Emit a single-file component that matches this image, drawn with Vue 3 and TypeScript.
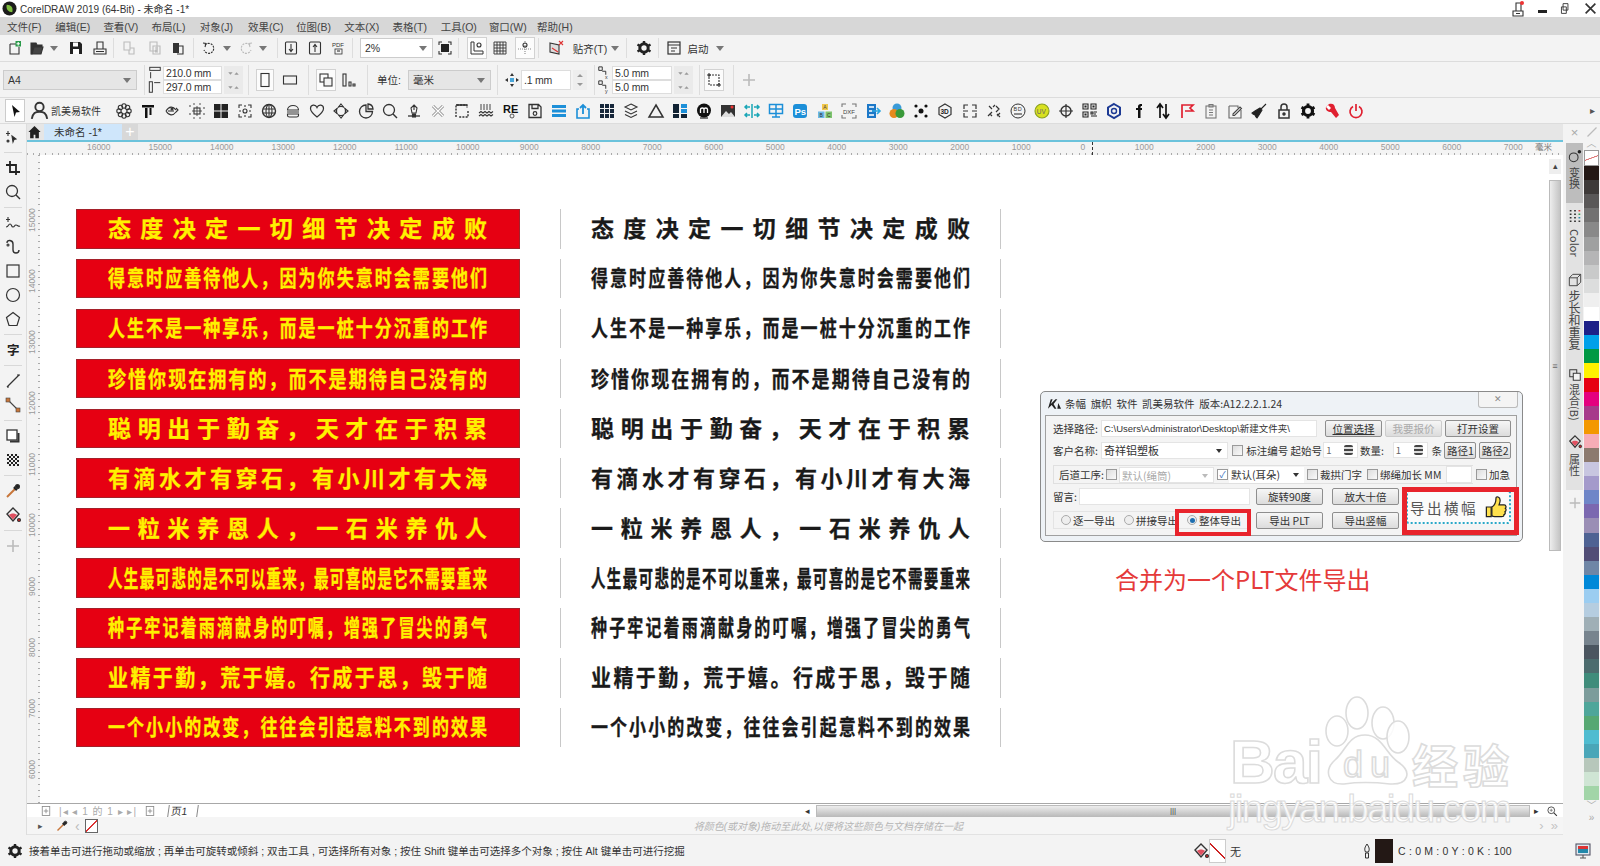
<script setup lang="ts">
interface Tool {
  x: number
  w?: number
  icon?: string
  text?: string
  cls?: string
  lines?: string[]
}

const flower = [0, 45, 90, 135, 180, 225, 270, 315]
  .map((a) => `<circle cx="${8 + 5 * Math.cos((a * Math.PI) / 180)}" cy="${8 + 5 * Math.sin((a * Math.PI) / 180)}" r="2.2"/>`)
  .join('')

const icons: Record<string, string> = {
  logo: '<circle cx="8" cy="8" r="7.5" fill="#1b1b1b" stroke="none"/><path d="M5 4c5 0 7 3 6 8-4 0-7-3-6-8z" fill="#7fbf3f" stroke="none"/>',
  new: '<path d="M3 4h6M3 4v10h9V7"/><rect x="8.5" y="1" width="5.5" height="5.5" fill="#2a9a4a" stroke="none"/><path d="M11.2 2v3.4M9.5 3.7h3.4" stroke="#fff"/>',
  open: '<path d="M2 3h5l1 2h5v2H5l-2 7H2z" fill="#333"/><path d="M5 7h9l-2 7H3z" fill="#444"/>',
  caret: '<path d="M4 6h8l-4 5z" fill="#777" stroke="none"/>',
  save: '<path d="M2 2h10l2 2v10H2z" fill="#222" stroke="none"/><rect x="5" y="2.5" width="5" height="4" fill="#fff" stroke="none"/><rect x="5" y="9" width="6" height="5" fill="#fff" stroke="none"/>',
  print: '<path d="M5 2h6v7H5zM2 9h12v5H2zM4 11.5h8"/>',
  lamp: '<path d="M6 2h5v8H6zM3 10h10v5H3zM6 12.500h4"/><circle cx="12" cy="2" r="2" fill="#e33" stroke="none"/>',
  g1: '<path d="M3 2h6v8H3zM9 8h4v6H8v-4" stroke="#bbb"/>',
  g2: '<path d="M3 2h7v9H3zM6 6h7v8H6zM8 8h3M8 10h3M8 12h3" stroke="#bbb"/>',
  paste: '<rect x="3" y="3" width="6" height="10" fill="#333" stroke="none"/><path d="M9 6h4v8H7"/>',
  undo: '<path d="M4 5a5 5 0 1 1-1 5" stroke-dasharray="2 1"/><path d="M2 3l3 .5L4 7"/>',
  redo: '<path d="M12 5a5 5 0 1 0 1 5" stroke="#bbb" stroke-dasharray="2 1"/><path d="M14 3l-3 .5L12 7" stroke="#bbb"/>',
  imp: '<rect x="2.5" y="2" width="11" height="12" rx="1"/><path d="M8 4v7M6 9l2 2.5L10 9"/>',
  exp: '<rect x="2.5" y="2" width="11" height="12" rx="1"/><path d="M8 12V5M6 7l2-2.5L10 7"/>',
  pdf: '<text x="1" y="7" font-size="6" fill="#333" stroke="none" font-family="Liberation Sans">PDF</text><rect x="4" y="9" width="7" height="5" stroke-width=".8"/><path d="M6 11h3"/>',
  fit: '<rect x="4" y="4" width="8" height="8" fill="#222" stroke="none"/><path d="M2 5V2h3M11 2h3v3M14 11v3h-3M5 14H2v-3"/>',
  rulerbox: '<path d="M2 2h3v9h9v3H2z" stroke-width="1"/><circle cx="10" cy="5" r="2"/>',
  grid: '<path d="M2 2h12v12H2zM5 2v12M8 2v12M11 2v12M2 5h12M2 8h12M2 11h12" stroke-width=".9"/>',
  guide: '<path d="M8 1v14M1 9h14" stroke="#888" stroke-dasharray="1 1"/><circle cx="8" cy="5" r="2"/>',
  snapx: '<path d="M2 3l9 2v9l-9-2z" fill="#ddd"/><path d="M4 8l6 4M11 1l4 4M15 1l-4 4" stroke="#d33"/>',
  gear: '<circle cx="8" cy="8" r="4.2" stroke="#222" stroke-width="3"/><path d="M8 1v3M8 12v3M1.5 4.5l2.5 1.5M12 10l2.5 1.5M1.5 11.5L4 10M12 6l2.5-1.5" stroke="#222" stroke-width="2.4"/>',
  win: '<rect x="2" y="2" width="12" height="12" stroke-width="1.2"/><path d="M2 5h12M5 8h6M5 11h4"/>',
  wh: '<rect x="2" y="1.5" width="12" height="3.5"/><path d="M3 7v7"/>',
  hh: '<rect x="1.5" y="2" width="3.5" height="12"/><path d="M7 3h7"/>',
  spin: '<path d="M5 5l3-3 3 3zM5 11l3 3 3-3z" fill="#999" stroke="none"/>',
  spinh: '<path d="M2 7h5L4.500 10zM9 10h5l-2.500-3z" fill="#999" stroke="none"/>',
  portrait: '<rect x="4" y="1.5" width="8" height="13"/>',
  land: '<rect x="1.5" y="4" width="13" height="8"/>',
  pages: '<rect x="2" y="2" width="8" height="8"/><rect x="6" y="6" width="8" height="8" fill="#f3f3f3"/>',
  bars: '<rect x="2" y="2" width="3" height="12"/><path d="M8 14h2v-4H8zM12 14h2v-2h-2z"/>',
  nudge: '<path d="M8 1l2 3H6zM8 15l-2-3h4zM1 8l3-2v4zM15 8l-3 2V6z" fill="#333" stroke="none"/><rect x="6" y="6" width="4" height="4" fill="#4aa5d8" stroke="none"/>',
  dup: '<path d="M2 1h4v4H2zM6 6h4v4"/><text x="9" y="15" font-size="6" fill="#333" stroke="none" font-family="Liberation Sans">x</text>',
  dupy: '<path d="M2 1h4v4H2zM6 6h4v4"/><text x="9" y="15" font-size="6" fill="#333" stroke="none" font-family="Liberation Sans">y</text>',
  frame: '<path d="M3 3h10v10H3z" stroke-dasharray="2 1"/><path d="M3 1v4M1 3h4M13 11v4M11 13h4"/>',
  plus: '<path d="M8 2v12M2 8h12" stroke="#bbb" stroke-width="1.6"/>',
  pick: '<path d="M5 2l8 7-4 .4L7.5 14z" fill="#111" stroke="none"/>',
  person: '<circle cx="8" cy="5" r="3.5" stroke-width="1.6"/><path d="M1.5 15c1-5 3-6 6.5-6s5.500 1 6.500 6" stroke-width="1.6"/>',
  flower: flower,
  tbar: '<path d="M2 2h12v2.500H2zM5 5h2.500v10H5zM9.500 5h2v7h-2z" fill="#111" stroke="none"/>',
  fish: '<path d="M2 8c3-5 7-5 10-1M2 8c3 5 7 5 10 1M12 5l2 2-2 2" /><circle cx="8" cy="6" r="1" fill="#333"/><path d="M4 8h6"/>',
  target: '<path d="M1 4V2M4 1h2M10 1h2M15 4v2M15 10v2M1 10v2M4 15h2M10 15h2" stroke="#555"/><rect x="5" y="5" width="6" height="6"/><path d="M8 3v10M3 8h10" stroke-width=".8"/>',
  four: '<rect x="1" y="1" width="6.500" height="6.500" fill="#222" stroke="none"/><rect x="8.500" y="1" width="6.500" height="6.500" fill="#222" stroke="none"/><rect x="1" y="8.500" width="6.500" height="6.500" fill="#222" stroke="none"/><rect x="8.500" y="8.500" width="6.500" height="6.500" fill="#222" stroke="none"/>',
  corners: '<path d="M2 5V2h3M11 2h3v3M14 11v3h-3M5 14H2v-3M8 2v2M8 12v2M2 8h2M12 8h2"/><circle cx="8" cy="8" r="2"/>',
  globe: '<circle cx="8" cy="8" r="6.500" stroke-width="1.400"/><ellipse cx="8" cy="8" rx="3" ry="6.500"/><path d="M2 6h12M2 10h12M8 1.500v13"/>',
  burger: '<path d="M2.500 7c0-6 11-6 11 0zM2 9h12M2.500 11h11v1.500c0 1-1 1.500-2 1.500h-7c-1 0-2-.500-2-1.500z" stroke-width="1.100"/>',
  heart: '<path d="M8 14C3 10 1.500 7.500 1.500 5.500c0-4 5-4.500 6.500-1 1.500-3.500 6.500-3 6.500 1 0 2-1.500 4.500-6.500 8.500z" stroke-width="1.200"/>',
  diamond: '<circle cx="8" cy="8" r="4.500"/><path d="M8 1l2 2.500H6zM8 15l-2-2.500h4zM1 8l2.500-2v4zM15 8l-2.500 2V6z"/>',
  pie: '<path d="M8 2a6.500 6.500 0 1 0 6.500 6.500H8z" stroke-width="1.300"/><path d="M10 1a5.500 5.500 0 0 1 5 5h-5z" stroke-width="1.300"/>',
  mag: '<circle cx="7" cy="7" r="5.500" stroke-width="1.300"/><path d="M11 11l4 4" stroke-width="1.500"/>',
  pen: '<path d="M8 2l3 3-1 5H6L5 5zM8 2v5" /><path d="M2 13h12" stroke-width="1.300"/><rect x="6.500" y="11" width="3" height="3" fill="#333"/>',
  xcut: '<path d="M3 13L13 3M3 3l10 10" stroke-width="3" stroke="#888"/><path d="M3 13L13 3M3 3l10 10" stroke-width="1.400" stroke="#fff"/>',
  dash: '<path d="M2 14V2h11v3M14 8v6H5" stroke-dasharray="2 1.200" stroke-width="1.400"/><path d="M2 2h11" stroke-width="1.600"/>',
  comb: '<path d="M3 1v6M6 1v6M9 1v6M12 1v6" stroke-width=".9"/><path d="M1 10l2-1.500 2 1.500 2-1.500 2 1.500 2-1.500 2 1.500 2-1.500M1 13l2-1.500 2 1.500 2-1.500 2 1.500 2-1.500 2 1.500 2-1.500"/>',
  re: '<text x="0" y="10" font-size="11" font-weight="700" fill="#111" stroke="none" font-family="Liberation Sans">RE</text><circle cx="9" cy="13" r="2" stroke-width=".8"/>',
  floppy: '<path d="M2 1.500h9.500l2.500 2.500v10.500H2zM5 1.500v4h6v-4" stroke-width="1.300"/><circle cx="8" cy="10.500" r="1.800" stroke-width="1.200"/>',
  lines: '<path d="M1 2h14v3H1zM1 6.500h14v3H1zM1 11h14v3H1z" fill="#1c8fd8" stroke="none"/>',
  upload: '<path d="M4 6H2v9h12V6h-2" stroke="#1c8fd8" stroke-width="1.600"/><path d="M8 11V2M5 5l3-3 3 3" stroke="#1c8fd8" stroke-width="1.800"/>',
  nine: '<path d="M1 1h4v4H1zM6 1h4v4H6zM11 1h4v4h-4zM1 6h4v4H1zM6 6h4v4H6zM11 6h4v4h-4zM1 11h4v4H1zM6 11h4v4H6zM11 11h4v4h-4z" fill="#17283b" stroke="none"/>',
  layers: '<path d="M8 1l6 3-6 3-6-3zM2 8l6 3 6-3M2 11.500l6 3 6-3" stroke-width="1.100"/>',
  tri: '<path d="M8 2l7 12H1z" stroke-width="1.500"/>',
  mosaic: '<path d="M1 1h6v9H1zM1 11h6v4H1z" fill="#123" stroke="none"/><path d="M9 1h6v4H9zM9 6h6v4H9z" fill="#1c8fd8" stroke="none"/><path d="M9 11h6v4H9z" fill="#123" stroke="none"/>',
  mcircle: '<circle cx="8" cy="7.500" r="7" fill="#111" stroke="none"/><path d="M4.500 10V6.500c0-2 3.500-2 3.500 0V10M8 6.500c0-2 3.500-2 3.500 0V10" stroke="#fff" stroke-width="1.300"/><path d="M4 15h8" stroke="#111"/>',
  image: '<rect x="1" y="2" width="14" height="12" fill="#333" stroke="none"/><path d="M1 14l5-6 3 3 2-2 4 5z" fill="#ddd" stroke="none"/><circle cx="12" cy="4" r="1.500" fill="#e33" stroke="none"/>',
  arrows4: '<path d="M8 1v14M1 4h5M10 4h5M1 12h5M10 12h5M3 2l-2 2 2 2M13 2l2 2-2 2M3 10l-2 2 2 2M13 10l2 2-2 2" stroke="#1aa6b7" stroke-width="1.500"/>',
  monitor: '<rect x="1.500" y="1.500" width="13" height="9" stroke="#1c8fd8" stroke-width="1.500"/><path d="M8 1.500v9M1.500 6h13M8 10.500v3M4 14h8" stroke="#1c8fd8" stroke-width="1.500"/>',
  ps: '<rect x="1" y="1" width="14" height="14" rx="3" fill="#1c8fd8" stroke="none"/><text x="2.500" y="12" font-size="9.500" font-weight="700" fill="#fff" stroke="none" font-family="Liberation Sans">Ps</text>',
  abc: '<rect x="5" y="1" width="6" height="6" fill="#f1c84a" stroke="none"/><rect x="1" y="8.500" width="6.500" height="6.500" fill="#6ab7e6" stroke="none"/><rect x="8.500" y="8.500" width="6.500" height="6.500" fill="#7fc36c" stroke="none"/><text x="6.200" y="6" font-size="5" fill="#444" stroke="none" font-family="Liberation Sans">A</text><text x="2.500" y="14" font-size="5" fill="#333" stroke="none" font-family="Liberation Sans">B</text><text x="10" y="14" font-size="5" fill="#333" stroke="none" font-family="Liberation Sans">C</text>',
  dxf: '<path d="M1 4V1h4M11 1h4v3M15 12v3h-4M5 15H1v-3" stroke="#777"/><text x="2" y="10.500" font-size="6" fill="#444" stroke="none" font-family="Liberation Sans">DXF</text>',
  earrow: '<path d="M2 1h9v14H2z" fill="#1c78c8" stroke="none"/><path d="M4 4h5M4 8h3M4 12h5" stroke="#fff" stroke-width="1.300"/><path d="M7 8h8M12 5l3 3-3 3" stroke="#2aa6e0" stroke-width="1.600"/>',
  rgb: '<circle cx="8" cy="5" r="4.500" fill="#3a9bd8" stroke="none"/><circle cx="5" cy="10.500" r="4.500" fill="#e68a1e" stroke="none"/><circle cx="11" cy="10.500" r="4.500" fill="#3a9a3a" stroke="none"/>',
  dots: '<circle cx="8" cy="8" r="2.500" fill="#111" stroke="none"/><circle cx="3" cy="3" r="1.600" fill="#111" stroke="none"/><circle cx="13" cy="3" r="1.600" fill="#111" stroke="none"/><circle cx="3" cy="13" r="1.600" fill="#111" stroke="none"/><circle cx="13" cy="13" r="1.600" fill="#111" stroke="none"/>',
  three: '<path d="M8 1l6 3.500v7L8 15l-6-3.500v-7z" stroke-width="1.200"/><text x="3.500" y="10.500" font-size="6.500" font-weight="700" fill="#222" stroke="none" font-family="Liberation Sans">3D</text>',
  bracket: '<path d="M2 6V2h4M10 2h4v4M14 10v4h-4M6 14H2v-4M1 8h5M10 8h5" stroke-width="1.200"/>',
  broken: '<path d="M2 13l4-4M6 13l-2-2M10 3l3 3-3 3M9 2l-2 2M14 10l-3 3M3 3l3 3M11 11l3 3" stroke-width="1.200"/>',
  bd: '<circle cx="8" cy="8" r="7" stroke-width="1"/><text x="3.500" y="8" font-size="5.500" fill="#333" stroke="none" font-family="Liberation Sans">B</text><text x="7.800" y="8" font-size="5.500" fill="#333" stroke="none" font-family="Liberation Sans">D</text><path d="M4 11h8"/>',
  uv: '<circle cx="8" cy="8" r="7" fill="#d8e020" stroke="#8aa020"/><text x="2.800" y="10.500" font-size="6.500" fill="#666" stroke="none" font-family="Liberation Sans">UV</text>',
  cross: '<circle cx="8" cy="8" r="5" stroke-width="1.400"/><path d="M8 1v14M1 8h14" stroke-width="1.200"/>',
  qr: '<path d="M1 1h5v5H1zM9 1h5v5H9zM1 9h5v5H1zM3 3h1v1H3zM11 3h1v1h-1zM3 11h1v1H3zM9 9h2v2H9zM12 9h3M9 13h6M12 11h2" stroke="#222" stroke-width="1.100"/>',
  hex: '<path d="M8 1l6 3.500v7L8 15l-6-3.500v-7z" stroke="#1d3a94" stroke-width="2"/><circle cx="8" cy="8" r="2.500" stroke="#1d3a94" stroke-width="1.400"/>',
  fb: '<path d="M7 15V7H5V5h2V3.500C7 1.500 8.500 1 11 1v2C9.500 3 9.500 3.500 9.500 5H11v2H9.500v8z" fill="#111" stroke="none"/>',
  updown: '<path d="M5 15V2M2 5l3-4 3 4M11 1v13M8 11l3 4 3-4" stroke="#111" stroke-width="1.700"/>',
  flag: '<path d="M3 15V2h11l-3 3 3 3H6" stroke="#e02030" stroke-width="1.700"/>',
  clip: '<rect x="3" y="3" width="10" height="12" stroke="#777"/><path d="M6 1.500h4V4H6zM6 7h4M6 9.500h4M6 12h4" stroke="#777"/>',
  edit: '<path d="M2 3h9v2M14 7v8H2V3" stroke="#666"/><path d="M6 11l7-7 1.500 1.500-7 7H6z" stroke="#444"/>',
  brush: '<path d="M15 1L9 7M9 5L4 8l-3 2 1 1 2 1 1 2 1 1 2-3 3-5z" fill="#222" stroke="#222"/>',
  lock: '<rect x="3" y="7" width="10" height="8" stroke-width="1.500"/><path d="M5 7V4c0-4 6-4 6 0v3" stroke-width="1.500"/><circle cx="8" cy="11" r="1.200" fill="#333"/>',
  blackgear: '<circle cx="8" cy="8" r="4.500" stroke="#111" stroke-width="3.200"/><path d="M8 .5v3M8 12.500v3M1.500 4.300l2.600 1.500M11.900 10.200l2.600 1.500M1.500 11.700l2.600-1.500M11.900 5.800l2.600-1.500" stroke="#111" stroke-width="2.800"/>',
  wrench: '<path d="M2 4l3-3c3-1 6 0 6 4l4 7-3 3-5-6C4 9 1 7 2 4z" fill="#e02030" stroke="none"/><path d="M2 4l3 3 2-2-3-3z" fill="#fff" stroke="none"/>',
  power: '<path d="M5 3.500a6 6 0 1 0 6 0" stroke="#e02030" stroke-width="1.700"/><path d="M8 1v7" stroke="#e02030" stroke-width="1.700"/>',
  shape: '<path d="M3 2v5M1 4.500h4" /><path d="M7 7l4 3-2 .5-1 2.500z" fill="#222"/><circle cx="3" cy="12" r="1" fill="#555"/>',
  crop: '<path d="M5 1v11h10M1 5h10v10" stroke="#222" stroke-width="1.800"/>',
  free: '<path d="M1 12c3 0 2-3 4-3s1 3 3 3 1-2 3-2 2 2 4 1" /><path d="M3 2v5M1 4.500h4"/>',
  curve: '<path d="M2 4c0-4 6-3 6 1v6c0 4 6 4 6 0" stroke-width="1.400"/><circle cx="3" cy="6" r="1"/>',
  rect: '<rect x="2" y="2" width="12" height="12" stroke-width="1.200"/>',
  ellipse: '<circle cx="8" cy="8" r="6.500" stroke-width="1.200"/>',
  poly: '<path d="M8 1.500l6.500 5-2.500 8H4l-2.500-8z" stroke-width="1.200"/>',
  ziti: '<text x="2" y="12.500" font-size="12.500" font-weight="700" fill="#222" stroke="none" font-family="Noto Sans CJK SC">字</text>',
  line: '<path d="M2 14L14 2" stroke-width="1.200"/><path d="M2 14h2M12 2h3"/>',
  connector: '<path d="M3 3l10 10" stroke="#444"/><rect x="1" y="1" width="4" height="4" fill="#c8763a" stroke="#444" stroke-width=".6"/><rect x="11" y="11" width="4" height="4" fill="#c8763a" stroke="#444" stroke-width=".6"/>',
  shadow: '<rect x="2" y="2" width="10" height="10" fill="#fff" stroke-width="1.300"/><path d="M13.500 5v8.500H5" stroke-width="2"/>',
  checker: '<rect x="2" y="2" width="12" height="12" fill="#222" stroke="none"/><path d="M4 2h2v2H4zM8 2h2v2H8zM12 2h2v2h-2zM2 4h2v2H2zM6 4h2v2H6zM10 4h2v2h-2zM4 6h2v2H4zM8 6h2v2H8zM12 6h2v2h-2zM2 8h2v2H2zM6 8h2v2H6zM10 8h2v2h-2zM4 10h2v2H4zM8 10h2v2H8zM12 10h2v2h-2zM2 12h2v2H2zM6 12h2v2H6zM10 12h2v2h-2z" fill="#eee" stroke="none"/>',
  dropper: '<path d="M2 14l8-8" stroke="#c8763a" stroke-width="2"/><path d="M9 4l3 3" stroke="#222" stroke-width="2.500"/><circle cx="12.500" cy="3.500" r="2" fill="#222"/>',
  fill: '<path d="M8 1l6 6-6 7-6-7z" stroke-width="1.400"/><path d="M4 8c2-2 6-2 8 0l-4 4.500z" fill="#e05060" stroke="none"/><circle cx="14" cy="13" r="1.500" fill="#c22"/>',
  nib: '<path d="M8 1c2 3 3 5 1.500 8h-3C5 6 6 4 8 1zM6.500 10h3v5h-3z" stroke-width="1"/>',
  screen: '<rect x="1" y="1" width="14" height="11" fill="#dfe8f0" stroke="#556"/><rect x="3" y="3" width="10" height="3" fill="#d33" stroke="none"/><rect x="3" y="6" width="10" height="4" fill="#28a" stroke="none"/><path d="M5 15h6M8 12v3" stroke="#555"/>',
  zoom: '<circle cx="7" cy="7" r="4.500"/><path d="M10.500 10.500l4 4" stroke-width="1.500"/><path d="M5 7h4M7 5v4" stroke="#777"/>',
  pagedoc: '<rect x="3" y="2" width="10" height="12" stroke="#888"/><path d="M8 5v6M5 8h6" stroke="#888"/>',
  hand: '<path d="M1 8h3.500v7H1z" fill="#ffe14d" stroke="#222" stroke-width=".9"/><path d="M5 8c2-1 3-4 3-6.500 0-1.500 3-1 3 1.500 0 1.500-.5 2.500-.8 3.500H14c1.500 0 1.500 2 .8 2.500.8.600.6 2-.3 2.500.5.800.2 1.800-.8 2.200.2 1-.5 1.300-1.700 1.300H7c-1 0-2-.5-2-1z" fill="#ffe14d" stroke="#222" stroke-width=".9"/>',
  ring: '<circle cx="6.500" cy="9.500" r="5" stroke-width="1.200"/><circle cx="13" cy="3" r="2" fill="#222" stroke="none"/>',
  colorbars: '<path d="M2 2h2M2 6h2M2 10h2M2 14h2M7 2h2M7 6h2M7 10h2M7 14h2" stroke="#333" stroke-width="1.600"/><path d="M12 2h2" stroke="#d33" stroke-width="1.600"/><path d="M12 6h2" stroke="#2a9a4a" stroke-width="1.600"/><path d="M12 10h2" stroke="#28a" stroke-width="1.600"/><path d="M12 14h2" stroke="#333" stroke-width="1.600"/>',
  cube: '<path d="M1.500 5.500h9v9h-9zM1.500 5.500l4-4h9v9l-4 4M10.500 5.500l4-4" stroke="#444"/>',
}

function place(items: Tool[]) {
  let end = 0
  return items.map((it) => {
    const w = it.w ?? 18
    const left = it.x - w / 2 - end
    end = it.x + w / 2
    return { ...it, style: { width: w + 'px', marginLeft: left + 'px' } }
  })
}

const topTools = place([
  { x: 15, icon: 'new' }, { x: 37, icon: 'open' }, { x: 54, w: 8, icon: 'caret' }, { x: 76, icon: 'save' }, { x: 100, icon: 'print' },
  { x: 113, w: 1, cls: 'sep' }, { x: 129, icon: 'g1' }, { x: 155, icon: 'g2' }, { x: 178, icon: 'paste' }, { x: 193, w: 1, cls: 'sep' },
  { x: 209, icon: 'undo' }, { x: 227, w: 8, icon: 'caret' }, { x: 246, icon: 'redo' }, { x: 263, w: 8, icon: 'caret' }, { x: 277, w: 1, cls: 'sep' },
  { x: 291, icon: 'imp' }, { x: 315, icon: 'exp' }, { x: 339, icon: 'pdf' }, { x: 352, w: 1, cls: 'sep' },
  { x: 396.5, w: 73, cls: 'combo', text: '2%' }, { x: 445, icon: 'fit' }, { x: 458, w: 1, cls: 'sep' },
  { x: 477, w: 20, icon: 'rulerbox', cls: 'box' }, { x: 500, icon: 'grid' }, { x: 525, w: 20, icon: 'guide', cls: 'box' }, { x: 538, w: 1, cls: 'sep' },
  { x: 556, icon: 'snapx' }, { x: 590, w: 36, text: '贴齐(T)', cls: 'lbl' }, { x: 615, w: 8, icon: 'caret' }, { x: 626, w: 1, cls: 'sep' },
  { x: 644, icon: 'gear' }, { x: 658, w: 1, cls: 'sep' }, { x: 674, icon: 'win' }, { x: 698, w: 26, text: '启动', cls: 'lbl' }, { x: 720, w: 8, icon: 'caret' },
])

const propTools = place([
  { x: 70, w: 134, cls: 'combo', text: 'A4' }, { x: 144, w: 1, cls: 'sep tall' }, { x: 155, w: 14, cls: 'pair', lines: ['wh', 'hh'] },
  { x: 192.5, w: 59, cls: 'stack', lines: ['210.0 mm', '297.0 mm'] }, { x: 233, w: 19, cls: 'pair spins', lines: ['spinh', 'spinh'] }, { x: 248, w: 1, cls: 'sep tall' },
  { x: 265, w: 18, icon: 'portrait', cls: 'box' }, { x: 290, icon: 'land' }, { x: 308, w: 1, cls: 'sep tall' },
  { x: 326, w: 20, icon: 'pages', cls: 'box' }, { x: 349, icon: 'bars' }, { x: 367, w: 1, cls: 'sep tall' },
  { x: 389, w: 30, text: '单位:', cls: 'lbl' }, { x: 449.5, w: 83, cls: 'combo', text: '毫米' }, { x: 497, w: 1, cls: 'sep tall' },
  { x: 512, icon: 'nudge' }, { x: 546, w: 50, cls: 'stack one', lines: ['.1 mm'] }, { x: 580, w: 14, icon: 'spin', cls: 'spinbox' }, { x: 594, w: 1, cls: 'sep tall' },
  { x: 604, w: 14, cls: 'pair', lines: ['dup', 'dupy'] }, { x: 642, w: 60, cls: 'stack', lines: ['5.0 mm', '5.0 mm'] }, { x: 683, w: 19, cls: 'pair spins', lines: ['spinh', 'spinh'] }, { x: 699, w: 1, cls: 'sep tall' },
  { x: 714, w: 20, icon: 'frame', cls: 'box' }, { x: 733, w: 1, cls: 'sep tall' }, { x: 749, icon: 'plus' },
])

const objectIcons = [
  'flower', 'tbar', 'fish', 'target', 'four', 'corners', 'globe', 'burger', 'heart', 'diamond', 'pie', 'mag', 'pen', 'xcut', 'dash', 'comb', 're', 'floppy',
  'lines', 'upload', 'nine', 'layers', 'tri', 'mosaic', 'mcircle', 'image', 'arrows4', 'monitor', 'ps', 'abc', 'dxf', 'earrow', 'rgb', 'dots', 'three', 'bracket',
  'broken', 'bd', 'uv', 'cross', 'qr', 'hex', 'fb', 'updown', 'flag', 'clip', 'edit', 'brush', 'lock', 'blackgear', 'wrench', 'power',
]

const menus = ['文件(F)', '编辑(E)', '查看(V)', '布局(L)', '对象(J)', '效果(C)', '位图(B)', '文本(X)', '表格(T)', '工具(O)', '窗口(W)', '帮助(H)']

const leftTools: string[][] = [
  ['shape'], ['crop', 'mag'], ['free', 'curve', 'rect', 'ellipse', 'poly'], ['ziti'], ['line', 'connector'], ['shadow', 'checker'], ['dropper', 'fill'], ['plus'],
]

// commas in the slogans are full-width
const slogans = [
  { text: '态度决定一切细节决定成败', size: 23, tall: 1 },
  { text: '得意时应善待他人,因为你失意时会需要他们', size: 17, tall: 1.28 },
  { text: '人生不是一种享乐,而是一桩十分沉重的工作', size: 17, tall: 1.28 },
  { text: '珍惜你现在拥有的,而不是期待自己没有的', size: 18, tall: 1.22 },
  { text: '聪明出于勤奋,天才在于积累', size: 23, tall: 1 },
  { text: '有滴水才有穿石,有小川才有大海', size: 22, tall: 1.03 },
  { text: '一粒米养恩人,一石米养仇人', size: 22, tall: 1.03 },
  { text: '人生最可悲的是不可以重来,最可喜的是它不需要重来', size: 14.5, tall: 1.6 },
  { text: '种子牢记着雨滴献身的叮嘱,增强了冒尖的勇气', size: 16, tall: 1.4 },
  { text: '业精于勤,荒于嬉。行成于思,毁于随', size: 20, tall: 1.12 },
  { text: '一个小小的改变,往往会引起意料不到的效果', size: 17, tall: 1.28 },
].map((s) => ({ ...s, text: s.text.replace(/,/g, '\uFF0C') }))

const hTicks = [16000, 15000, 14000, 13000, 12000, 11000, 10000, 9000, 8000, 7000, 6000, 5000, 4000, 3000, 2000, 1000, 0, 1000, 2000, 3000, 4000, 5000, 6000, 7000]
const vTicks = [15000, 14000, 13000, 12000, 11000, 10000, 9000, 8000, 7000, 6000]

const swatches = [
  '#231815', '#3e3a39', '#595757', '#727171', '#898989', '#9fa0a0', '#b5b5b6', '#c9caca', '#dcdddd', '#efefef', '#ffffff', '#1d2088', '#00a0e9', '#009944', '#fff100', '#e60012', '#e4007f',
  '#a73a8b', '#f39800', '#f6adb6', '#8c7a6e', '#c8c6e0', '#a49acb', '#6f86c8', '#7b68b0', '#9a8eb5', '#4e6293', '#514d76', '#6f86a6', '#0088d8', '#9bcdf1', '#b5cde0', '#9fafb6', '#77848e',
  '#4b5660', '#4c6c6e', '#3f8c7b', '#7c9c9b', '#4ea69a', '#56a873', '#4fbcd0', '#4aa6b8', '#b7c7bb', '#cfe5d4', '#a2d5a8',
]

const docks = [
  { label: '变换', icon: 'ring', cls: 'active' },
  { label: 'Color', icon: 'colorbars', cls: 'color' },
  { label: '步长和重复', icon: 'cube', cls: 'step' },
  { label: '混合(B)', icon: 'pages', cls: 'mix' },
  { label: '属性', icon: 'fill', cls: 'attr' },
]
</script>

<template>
  <div class="app">
    <header class="titlebar">
      <svg class="ic logo" viewBox="0 0 16 16" v-html="icons.logo"></svg>
      <span class="title">CorelDRAW 2019 (64-Bit) - 未命名 -1*</span>
      <span class="winbtns">
        <svg class="ic" viewBox="0 0 16 16" v-html="icons.lamp"></svg>
        <b class="min"></b>
        <svg class="ic small" viewBox="0 0 16 16"><path d="M5 2h6v8H5zM3 6h6v8H3z" /></svg>
        <svg class="ic small" viewBox="0 0 16 16"><path d="M2 2l12 12M14 2L2 14" stroke-width="2" /></svg>
      </span>
    </header>

    <nav class="menubar">
      <span v-for="m in menus" :key="m" class="menu">{{ m }}</span>
    </nav>

    <div class="toolbar tb1">
      <div v-for="(it, i) in topTools" :key="i" class="item" :class="it.cls" :style="it.style">
        <svg v-if="it.icon" class="ic" viewBox="0 0 16 16" v-html="icons[it.icon]"></svg>
        <span v-if="it.text">{{ it.text }}</span>
      </div>
    </div>

    <div class="toolbar tb2">
      <div v-for="(it, i) in propTools" :key="i" class="item" :class="it.cls" :style="it.style">
        <svg v-if="it.icon" class="ic" viewBox="0 0 16 16" v-html="icons[it.icon]"></svg>
        <span v-if="it.text">{{ it.text }}</span>
        <template v-if="it.cls?.startsWith('stack')">
          <div v-for="(l, k) in it.lines" :key="k" class="field">{{ l }}</div>
        </template>
        <template v-if="it.cls?.startsWith('pair')">
          <svg v-for="(l, k) in it.lines" :key="k" class="ic half" viewBox="0 0 16 16" v-html="icons[l]"></svg>
        </template>
      </div>
    </div>

    <div class="toolbar tb3">
      <div class="pick"><svg class="ic" viewBox="0 0 16 16" v-html="icons.pick"></svg></div>
      <svg class="ic person" viewBox="0 0 16 16" v-html="icons.person"></svg>
      <span class="brand">凯美易软件</span>
      <span v-for="n in objectIcons" :key="n" class="obj">
        <svg class="ic" viewBox="0 0 16 16" v-html="icons[n]"></svg>
      </span>
      <span class="endcaret">▸</span>
    </div>

    <div class="work">
      <aside class="lefttools">
        <template v-for="(grp, g) in leftTools" :key="g">
          <div v-if="g" class="hsep"></div>
          <div v-for="n in grp" :key="n" class="tool"><svg class="ic" viewBox="0 0 16 16" v-html="icons[n]"></svg></div>
        </template>
      </aside>

      <div class="center">
        <div class="tabs">
          <svg class="home" viewBox="0 0 16 16"><path d="M8 1L1 8h2v7h4v-4h2v4h4V8h2z" fill="#222" /></svg>
          <span class="tab">未命名 -1*</span>
          <span class="tabplus">+</span>
        </div>
        <div class="hruler">
          <span v-for="(t, i) in hTicks" :key="i" class="htick" :class="{ zero: t === 0 }">{{ t }}</span>
          <span class="unit">毫米</span>
        </div>

        <div class="stage">
          <div class="vruler">
            <span v-for="t in vTicks" :key="t" class="vtick">{{ t }}</span>
          </div>

          <main class="canvas">
            <div class="rows">
              <template v-for="s in slogans" :key="s.text">
                <div class="banner red">
                  <span class="slogan" :style="{ fontSize: s.size + 'px', transform: `scaleY(${s.tall})` }">{{ s.text }}</span>
                </div>
                <div class="banner plain">
                  <span class="slogan" :style="{ fontSize: s.size + 'px', transform: `scaleY(${s.tall})` }">{{ s.text }}</span>
                </div>
              </template>
            </div>

            <section class="dialog">
              <div class="dlgtitle">
                <svg class="dlglogo" viewBox="0 0 16 12"><path d="M1 11L4 1h2L4 6l5-5h2L7 6l3 5H8L5 7zM11 11l1-6 3 6z" fill="#222" /></svg>
                <span>条幅&nbsp; 旗帜&nbsp; 软件&nbsp; 凯美易软件&nbsp; 版本:A12.2.2.1.24</span>
                <span class="dlgclose">✕</span>
              </div>
              <div class="panel">
                <div class="row r1">
                  <label class="lab">选择路径:</label>
                  <div class="inp path">C:\Users\Administrator\Desktop\新建文件夹\</div>
                  <button class="btn pos">位置选择</button>
                  <button class="btn quote" disabled>我要报价</button>
                  <button class="btn open">打开设置</button>
                </div>
                <div class="row r2">
                  <label class="lab">客户名称:</label>
                  <div class="inp cust">奇祥铝塑板<i class="drop"></i></div>
                  <i class="cb c1"></i><span class="t1">标注编号 起始号</span>
                  <div class="inp num">1<i class="updn"></i></div>
                  <span class="t2">数量:</span>
                  <div class="inp num">1<i class="updn"></i></div>
                  <span class="t3">条</span>
                  <button class="btn p1">路径1</button>
                  <button class="btn p2">路径2</button>
                </div>
                <div class="row r3">
                  <div class="grp">
                    <span class="lab3">后道工序:</span>
                    <i class="cb"></i>
                    <div class="inp c3 dim">默认(绳筒)<i class="drop light"></i></div>
                    <i class="cb on">✓</i>
                    <div class="inp c4">默认(耳朵)<i class="drop"></i></div>
                    <i class="cb"></i><span class="t4">裁拱门字</span>
                    <i class="cb"></i><span class="t5">绑绳加长 MM</span>
                    <div class="inp mm"></div>
                  </div>
                  <i class="cb"></i><span class="t6">加急</span>
                </div>
                <div class="bottom">
                  <div class="leftcol">
                    <div class="row r4">
                      <label class="lab4">留言:</label>
                      <div class="inp msg"></div>
                      <button class="btn act">旋转90度</button>
                      <button class="btn act">放大十倍</button>
                    </div>
                    <div class="row r5">
                      <div class="radios">
                        <i class="rd"></i><span class="rt">逐一导出</span>
                        <i class="rd"></i><span class="rt">拼接导出</span>
                        <i class="rd sel"></i><span class="rt">整体导出</span>
                      </div>
                      <button class="btn act">导出 PLT</button>
                      <button class="btn act">导出竖幅</button>
                    </div>
                  </div>
                  <button class="bigbtn">
                    <span>导出横幅</span>
                    <svg viewBox="0 0 16 16" v-html="icons.hand"></svg>
                  </button>
                </div>
              </div>
              <div class="mark markradio"></div>
              <div class="mark markbig"></div>
            </section>

            <p class="caption">合并为一个PLT文件导出</p>
          </main>

          <div class="vscroll">
            <span class="vbtn">▴</span>
            <div class="vthumb"><span>≡</span></div>
          </div>
        </div>

        <div class="pagebar">
          <svg class="ic nav" viewBox="0 0 16 16" v-html="icons.pagedoc"></svg>
          <span class="navtxt">|◂ ◂ 1 的 1 ▸ ▸|</span>
          <svg class="ic nav" viewBox="0 0 16 16" v-html="icons.pagedoc"></svg>
          <span class="pagetab">页1</span>
          <span class="sarrow">◂</span>
          <div class="hthumb"><span>|||</span></div>
          <span class="sarrow">▸</span>
          <svg class="ic nav zm" viewBox="0 0 16 16" v-html="icons.zoom"></svg>
        </div>

        <div class="colorbar">
          <span class="cbcaret">▸</span>
          <svg class="ic nav" viewBox="0 0 16 16" v-html="icons.dropper"></svg>
          <span class="cbprev">‹</span>
          <span class="noneswatch"></span>
          <span class="hint">将颜色(或对象)拖动至此处,以便将这些颜色与文档存储在一起</span>
          <span class="cbnext">› &nbsp;»</span>
        </div>
      </div>

      <div class="dock">
        <span class="dockx">×</span>
        <div v-for="d in docks" :key="d.label" class="docktab" :class="d.cls">
          <svg class="ic" viewBox="0 0 16 16" v-html="icons[d.icon]"></svg>
          <span>{{ d.label }}</span>
        </div>
        <svg class="ic dockplus" viewBox="0 0 16 16" v-html="icons.plus"></svg>
      </div>

      <div class="palette">
        <svg class="ic palpen" viewBox="0 0 16 16"><path d="M2 14L12 4l2-2" stroke="#bbb" stroke-width="1.600" /></svg>
        <span class="chev">︿</span>
        <div class="swatches">
          <i class="swatch none"></i>
          <i v-for="c in swatches" :key="c" class="swatch" :style="{ background: c }"></i>
        </div>
        <span class="chev">﹀</span>
        <span class="chev">»</span>
      </div>
    </div>

    <footer class="status">
      <svg class="ic" viewBox="0 0 16 16" v-html="icons.gear"></svg>
      <span class="stext">接着单击可进行拖动或缩放 ; 再单击可旋转或倾斜 ; 双击工具 , 可选择所有对象 ; 按住 Shift 键单击可选择多个对象 ; 按住 Alt 键单击可进行挖掘</span>
      <svg class="ic sfill" viewBox="0 0 16 16" v-html="icons.fill"></svg>
      <span class="sswatch"></span>
      <span class="snone">无</span>
      <svg class="ic snib" viewBox="0 0 16 16" v-html="icons.nib"></svg>
      <span class="sblack"></span>
      <span class="scmyk">C : 0 M : 0 Y : 0 K : 100</span>
      <svg class="ic sscreen" viewBox="0 0 16 16" v-html="icons.screen"></svg>
    </footer>

    <svg class="watermark" viewBox="0 0 400 160">
      <g class="wm">
        <text x="30" y="103" font-size="62" font-weight="700" textLength="93" font-family="Liberation Sans">Bai</text>
        <ellipse cx="157" cy="33" rx="11" ry="16" />
        <ellipse cx="183" cy="43" rx="11" ry="16" />
        <ellipse cx="137" cy="51" rx="11" ry="15" />
        <ellipse cx="198" cy="57" rx="11" ry="16" />
        <path d="M165 55C182 55 186 74 198 82 213 92 208 105 190 104 172 102 158 102 144 104 127 105 124 90 135 80 146 71 148 55 165 55z" />
        <text x="143" y="97" font-size="36" textLength="47" font-family="Liberation Sans">du</text>
        <text x="212" y="103" font-size="46" font-weight="700" textLength="97" font-family="Noto Sans CJK SC">经验</text>
      </g>
      <text class="wm2" x="28" y="142" font-size="39" textLength="284" font-family="Liberation Sans">jingyan.baidu.com</text>
    </svg>
  </div>
</template>

<style>
body {
  margin: 0;
  overflow: hidden;
  background: #fff;
}
</style>

<style scoped>
.app {
  position: relative;
  width: 1600px;
  height: 866px;
  display: flex;
  flex-direction: column;
  overflow: hidden;
  font-family: "Liberation Sans", "Noto Sans CJK SC", sans-serif;
  font-size: 11px;
  color: #333;
  background: #f3f3f3;
}
.ic {
  width: 16px;
  height: 16px;
  flex-shrink: 0;
  fill: none;
  stroke: #333;
  stroke-width: 1.1;
  overflow: visible;
}
.titlebar {
  height: 17px;
  display: flex;
  align-items: center;
  background: #fff;
  padding-left: 2px;
}
.title {
  margin-left: 3px;
  font-size: 10px;
  color: #333;
}
.logo {
  width: 15px;
  height: 15px;
}
.winbtns {
  margin-left: auto;
  display: flex;
  align-items: center;
  gap: 12px;
  padding-right: 3px;
}
.winbtns .small {
  width: 13px;
  height: 13px;
}
.min {
  width: 9px;
  height: 3px;
  margin-top: 6px;
  background: #222;
}
.menubar {
  height: 18px;
  display: flex;
  align-items: center;
  padding-left: 7px;
  background: #d7d7d7;
}
.menu {
  width: 48.2px;
  flex-shrink: 0;
  font-size: 10.5px;
  color: #444;
}
.toolbar {
  display: flex;
  align-items: center;
  background: #f3f3f3;
  border-bottom: 1px solid #dcdcdc;
  box-sizing: border-box;
}
.tb1 {
  height: 27px;
}
.tb2 {
  height: 36px;
}
.tb3 {
  height: 26px;
  padding-left: 5px;
}
.item {
  flex-shrink: 0;
  display: flex;
  align-items: center;
  justify-content: center;
  box-sizing: border-box;
}
.sep {
  height: 20px;
  background: #ddd;
}
.sep.tall {
  height: 30px;
}
.box {
  height: 22px;
  background: #fcfcfc;
  border: 1px solid #d2d2d2;
}
.lbl {
  font-size: 10.5px;
  white-space: nowrap;
}
.combo {
  position: relative;
  height: 20px;
  justify-content: flex-start;
  padding-left: 4px;
  background: #fff;
  border: 1px solid #ccc;
  font-size: 10.5px;
}
.tb2 .combo {
  background: #e6e6e6;
}
.combo::after {
  content: "";
  position: absolute;
  right: 5px;
  top: 7px;
  border: 4px solid transparent;
  border-top: 5px solid #777;
  border-bottom: 0;
}
.stack {
  flex-direction: column;
}
.field {
  width: 100%;
  height: 14px;
  line-height: 13px;
  box-sizing: border-box;
  padding-left: 2px;
  background: #fff;
  border: 1px solid #ddd;
  font-size: 10.5px;
  letter-spacing: -0.2px;
  color: #333;
  white-space: nowrap;
}
.one .field {
  height: 20px;
  line-height: 18px;
}
.pair {
  flex-direction: column;
}
.half {
  width: 14px;
  height: 14px;
}
.spins .half {
  width: 19px;
  background: #eaeaea;
}
.spinbox {
  height: 20px;
  background: #eee;
}
.pick {
  width: 20px;
  height: 23px;
  display: flex;
  align-items: center;
  justify-content: center;
  background: #fff;
  border: 1px solid #ccc;
  box-sizing: border-box;
}
.person {
  width: 19px;
  height: 19px;
  margin-left: 5px;
}
.brand {
  width: 50px;
  margin-left: 2px;
  font-size: 10px;
  white-space: nowrap;
}
.obj {
  width: 24.17px;
  flex-shrink: 0;
  display: flex;
  justify-content: center;
}
.brand + .obj {
  margin-left: 11px;
}
.endcaret {
  margin-left: auto;
  margin-right: 5px;
  color: #555;
  font-size: 10px;
}
.work {
  flex: 1;
  display: flex;
  min-height: 0;
}
.lefttools {
  width: 27px;
  flex-shrink: 0;
  box-sizing: border-box;
  border-right: 1px solid #ddd;
  padding-top: 1px;
}
.tool {
  height: 24px;
  display: flex;
  align-items: center;
  justify-content: center;
}
.hsep {
  height: 1px;
  margin: 3px 4px;
  background: #d8d8d8;
}
.center {
  flex: 1;
  min-width: 0;
  display: flex;
  flex-direction: column;
}
.tabs {
  height: 18px;
  box-sizing: border-box;
  display: flex;
  align-items: center;
  background: #e6e6e6;
  border-bottom: 2px solid #6cc3dc;
}
.home {
  width: 15px;
  height: 14px;
}
.tab {
  width: 78px;
  height: 16px;
  line-height: 16px;
  padding-left: 10px;
  margin-left: 2px;
  box-sizing: border-box;
  background: #cfe6fb;
  font-size: 10.5px;
}
.tabplus {
  width: 16px;
  height: 16px;
  line-height: 15px;
  text-align: center;
  background: #d8d8d8;
  color: #fff;
  font-size: 16px;
}
.hruler {
  height: 13px;
  display: flex;
  padding-left: 41px;
  background:
    repeating-linear-gradient(90deg, #aaa 0 1px, transparent 1px 6.15px) left bottom / 100% 2px no-repeat,
    #f4f4f4;
}
.htick {
  position: relative;
  width: 61.5px;
  flex-shrink: 0;
  text-align: center;
  font-size: 8.5px;
  line-height: 11px;
  color: #999;
}
.zero::after {
  content: "";
  position: absolute;
  left: 40px;
  top: 0;
  height: 13px;
  border-left: 1px dashed #333;
}
.unit {
  width: 22px;
  margin-left: -9px;
  font-size: 8.5px;
  line-height: 11px;
  color: #777;
}
.stage {
  flex: 1;
  min-height: 0;
  display: flex;
}
.vruler {
  width: 13px;
  flex-shrink: 0;
  box-sizing: border-box;
  padding-top: 35px;
  background:
    repeating-linear-gradient(0deg, #aaa 0 1px, transparent 1px 6.1px) right top / 2px 100% no-repeat,
    #f4f4f4;
}
.vtick {
  display: block;
  height: 61px;
  writing-mode: vertical-rl;
  transform: rotate(180deg);
  text-align: center;
  font-size: 8.5px;
  line-height: 11px;
  color: #999;
}
.canvas {
  position: relative;
  flex: 1;
  min-width: 0;
  background: #fff;
  padding: 54px 0 0 36px;
  box-sizing: border-box;
}
.rows {
  display: grid;
  grid-template-columns: 444px 441px;
  grid-auto-rows: 39.5px;
  column-gap: 40px;
  row-gap: 10.4px;
}
.banner {
  display: flex;
  align-items: center;
  box-sizing: border-box;
  padding-bottom: 2px;
  overflow: hidden;
}
.red {
  padding-left: 31px;
  background: #e60012;
  border: 1px solid #a4202a;
  color: #fff100;
}
.plain {
  padding-left: 30px;
  background: #fff;
  border-left: 1px solid #c8c8c8;
  border-right: 1px solid #c8c8c8;
  color: #1a1a1a;
}
.slogan {
  display: block;
  width: 379px;
  flex-shrink: 0;
  font-family: "Noto Sans CJK SC", sans-serif;
  font-weight: 700;
  line-height: 1.2;
  white-space: nowrap;
  text-align: justify;
  text-align-last: justify;
  -webkit-text-stroke: 0.25px currentColor;
}
.dialog {
  position: absolute;
  left: 1000px;
  top: 236px;
  width: 483px;
  height: 151px;
  box-sizing: border-box;
  background: #eef2f6;
  border: 1px solid #8a8a8a;
  border-radius: 5px;
  padding: 0 4px;
  font-family: "Noto Sans CJK SC", "Liberation Sans", sans-serif;
  font-size: 10.5px;
  color: #333;
}
.dlgtitle {
  height: 23px;
  display: flex;
  align-items: center;
  padding-left: 2px;
  font-size: 10.5px;
  white-space: nowrap;
}
.dlglogo {
  width: 15px;
  height: 12px;
  margin-right: 3px;
}
.dlgclose {
  position: absolute;
  right: 4px;
  top: 0;
  width: 38px;
  height: 15px;
  line-height: 14px;
  text-align: center;
  border: 1px solid #bbb;
  border-top: 0;
  border-radius: 0 0 3px 3px;
  background: #f4f4f4;
  color: #888;
  font-size: 9px;
}
.panel {
  width: 472px;
  height: 121px;
  box-sizing: border-box;
  padding: 4px 5px 0 7px;
  background: #f4f4f4;
  border: 1px solid #a0a0a0;
}
.row {
  display: flex;
  align-items: center;
  white-space: nowrap;
}
.lab {
  width: 48px;
  flex-shrink: 0;
}
.inp {
  position: relative;
  box-sizing: border-box;
  height: 17px;
  line-height: 15px;
  padding-left: 2px;
  background: #fff;
  border: 1px solid #e4e4e4;
}
.path {
  width: 216px;
  font-family: "Liberation Sans", "Noto Sans CJK SC", sans-serif;
  font-size: 9.5px;
}
.btn {
  box-sizing: border-box;
  height: 17px;
  padding: 0;
  background: linear-gradient(#f6f6f6, #dcdcdc);
  border: 1px solid #8e8e8e;
  border-radius: 2px;
  font: inherit;
  color: #333;
}
.pos {
  width: 57px;
  margin-left: 8px;
  text-decoration: underline;
}
.quote {
  width: 57px;
  margin-left: 3px;
  color: #aaa;
  border-color: #ccc;
}
.open {
  width: 66px;
  margin-left: 3px;
}
.r2 {
  margin-top: 4px;
  height: 18px;
}
.cust {
  width: 128px;
  font-size: 11px;
}
.drop {
  position: absolute;
  right: 5px;
  top: 6px;
  border: 3.5px solid transparent;
  border-top: 4px solid #333;
  border-bottom: 0;
}
.drop.light {
  border-top-color: #bbb;
}
.cb {
  width: 11px;
  height: 11px;
  flex-shrink: 0;
  box-sizing: border-box;
  background: linear-gradient(135deg, #ddd, #fafafa);
  border: 1px solid #9a9a9a;
}
.cb.on {
  font-style: normal;
  font-size: 9px;
  line-height: 9px;
  color: #4070c0;
  text-align: center;
  background: #fff;
}
.c1 {
  margin-left: 4px;
}
.t1 {
  margin-left: 3px;
  width: 74px;
}
.num {
  width: 35px;
  margin-left: 3px;
  height: 16px;
  color: #666;
  font-size: 9.5px;
}
.updn {
  position: absolute;
  right: 4px;
  top: 2px;
  width: 9px;
  height: 10px;
  background: linear-gradient(#444 0 2px, #ddd 2px 4px, #444 4px 6px, #ddd 6px 8px, #444 8px);
  border-radius: 2px;
}
.t2 {
  margin-left: 2px;
  width: 30px;
}
.t3 {
  margin-left: 4px;
  width: 13px;
}
.p1 {
  width: 32px;
}
.p2 {
  width: 32px;
  margin-left: 3px;
}
.r3 {
  margin-top: 6px;
  height: 19px;
}
.grp {
  width: 420px;
  height: 19px;
  display: flex;
  align-items: center;
  box-sizing: border-box;
  padding-left: 5px;
  border: 1px solid #e0e0e0;
  border-right: 0;
}
.lab3 {
  width: 47px;
}
.c3 {
  width: 95px;
  margin-left: 2px;
  color: #aaa;
  height: 16px;
}
.grp .on {
  margin-left: 3px;
}
.c4 {
  width: 75px;
  margin-left: 1px;
  height: 16px;
  border: 0;
}
.t4 {
  margin-left: 2px;
  width: 43px;
}
.t5 {
  margin-left: 2px;
  width: 62px;
}
.grp .t4 + .cb {
  margin-left: 4px;
}
.grp > .c4 + .cb {
  margin-left: 3px;
}
.mm {
  width: 26px;
  margin-left: 4px;
}
.t6 {
  margin-left: 2px;
}
.r3 > .cb {
  margin-left: 3px;
}
.bottom {
  display: flex;
  margin-top: 4px;
}
.leftcol {
  width: 346px;
}
.lab4 {
  width: 26px;
}
.msg {
  width: 171px;
  height: 17px;
}
.act {
  width: 67px;
  margin-left: 6px;
}
.act + .act {
  margin-left: 9px;
}
.r5 {
  margin-top: 6px;
}
.radios {
  width: 197px;
  height: 18px;
  display: flex;
  align-items: center;
  box-sizing: border-box;
  padding-left: 7px;
  border: 1px solid #e4e4e4;
  border-right: 0;
  overflow: hidden;
}
.rd {
  position: relative;
  width: 10px;
  height: 10px;
  flex-shrink: 0;
  box-sizing: border-box;
  border: 1px solid #aaa;
  border-radius: 50%;
  background: #eee;
}
.rd.sel::after {
  content: "";
  position: absolute;
  left: 1.5px;
  top: 1.5px;
  width: 5px;
  height: 5px;
  border-radius: 50%;
  background: #1f6fb0;
}
.rt {
  width: 48px;
  margin-left: 2px;
  margin-right: 6px;
}
.bigbtn {
  width: 105px;
  height: 34px;
  margin: 2px 0 0 7px;
  padding: 0;
  display: flex;
  align-items: center;
  justify-content: center;
  gap: 7px;
  background: #fbfbfb;
  border: 2px dotted #2aa8c8;
  border-radius: 3px;
  font-family: "Noto Sans CJK SC", sans-serif;
  font-size: 14.5px;
  letter-spacing: 2.5px;
  color: #555;
}
.bigbtn svg {
  width: 22px;
  height: 22px;
}
.mark {
  position: absolute;
  box-sizing: border-box;
  border: 4px solid #e8242c;
  pointer-events: none;
}
.markradio {
  left: 134px;
  top: 117px;
  width: 76px;
  height: 27px;
}
.markbig {
  left: 361px;
  top: 95px;
  width: 117px;
  height: 48px;
  border-width: 5px;
}
.caption {
  position: absolute;
  left: 1075px;
  top: 407px;
  margin: 0;
  font-family: "Noto Sans CJK SC", sans-serif;
  font-size: 24px;
  line-height: 34px;
  color: #e53a3a;
  white-space: nowrap;
}
.vscroll {
  width: 14px;
  flex-shrink: 0;
  box-sizing: border-box;
  padding: 4px 2px 0 0;
  background: #fff;
  text-align: center;
}
.vbtn {
  display: block;
  height: 15px;
  background: #eee;
  font-size: 9px;
  line-height: 15px;
  color: #444;
}
.vthumb {
  height: 371px;
  margin-top: 6px;
  display: flex;
  align-items: center;
  justify-content: center;
  box-sizing: border-box;
  background: linear-gradient(90deg, #ededed, #c4c4c4);
  border: 1px solid #bbb;
  font-size: 9px;
  color: #666;
}
.pagebar {
  height: 14px;
  display: flex;
  align-items: center;
  padding-left: 13px;
  background: #fff;
  border-top: 1px solid #a8a8a8;
  box-sizing: border-box;
  font-size: 10px;
  color: #aaa;
}
.nav {
  width: 12px;
  height: 12px;
}
.navtxt {
  width: 92px;
  text-align: center;
  letter-spacing: 1px;
  white-space: nowrap;
}
.pagetab {
  width: 26px;
  margin-left: 12px;
  padding-left: 2px;
  color: #333;
  background: #fff;
  font-size: 10.5px;
  line-height: 12px;
  transform: skewX(-8deg);
  border-left: 1px solid #888;
  border-right: 1px solid #888;
}
.sarrow {
  margin-left: 607px;
  width: 11px;
  color: #333;
  font-size: 9px;
}
.hthumb {
  width: 714px;
  height: 12px;
  display: flex;
  align-items: center;
  justify-content: center;
  box-sizing: border-box;
  background: linear-gradient(#ededed, #bdbdbd);
  border: 1px solid #bbb;
  font-size: 8px;
  color: #444;
}
.hthumb + .sarrow {
  margin-left: 4px;
}
.zm {
  margin-left: 1px;
}
.colorbar {
  height: 18px;
  display: flex;
  align-items: center;
  box-sizing: border-box;
  background: #f5f5f5;
  border-bottom: 1px solid #e2e2e2;
  color: #bbb;
}
.cbcaret {
  margin-left: 11px;
  width: 11px;
  font-size: 9px;
  color: #555;
}
.colorbar .nav {
  margin-left: 7px;
}
.cbprev {
  margin-left: 7px;
  font-size: 14px;
  line-height: 12px;
}
.noneswatch {
  width: 13px;
  height: 14px;
  margin-left: 5px;
  box-sizing: border-box;
  background-color: #fff;
  background-image: linear-gradient(135deg, transparent 46%, #d33 46% 54%, transparent 54%);
  border: 1px solid #666;
}
.hint {
  margin-left: 596px;
  font-size: 10px;
  font-style: italic;
  color: #b4b4b4;
  white-space: nowrap;
}
.cbnext {
  margin-left: auto;
  margin-right: 5px;
  font-size: 13px;
  color: #c4c4c4;
}
.dock {
  width: 21px;
  flex-shrink: 0;
  box-sizing: border-box;
  padding: 0 1px 0 3px;
  text-align: center;
  background: #f3f3f3;
}
.dockx {
  display: block;
  height: 19px;
  line-height: 18px;
  color: #aaa;
  font-size: 13px;
}
.docktab {
  display: flex;
  flex-direction: column;
  align-items: center;
  box-sizing: border-box;
  background: #e2e2e2;
}
.docktab span {
  writing-mode: vertical-rl;
  font-size: 11px;
  font-family: "Noto Sans CJK SC", sans-serif;
  color: #444;
  white-space: nowrap;
}
.docktab .ic {
  width: 14px;
  height: 14px;
}
.active {
  height: 60px;
  padding-top: 6px;
  gap: 4px;
  background: #bdbdbd;
}
.color {
  height: 58px;
  padding-top: 6px;
  gap: 6px;
}
.step {
  height: 101px;
  padding-top: 12px;
  gap: 3px;
}
.step span {
  font-size: 12px;
}
.mix {
  height: 61px;
  padding-top: 6px;
  gap: 2px;
}
.attr {
  height: 67px;
  padding-top: 12px;
  gap: 5px;
}
.dockplus {
  width: 14px;
  height: 14px;
  margin-top: 6px;
}
.palette {
  width: 16px;
  flex-shrink: 0;
  display: flex;
  flex-direction: column;
  align-items: center;
  box-sizing: border-box;
  padding-right: 1px;
}
.palpen {
  width: 12px;
  height: 12px;
  margin-top: 2px;
}
.chev {
  font-size: 10px;
  line-height: 12px;
  height: 12px;
  color: #aaa;
}
.swatches {
  width: 15px;
  height: 650px;
  display: flex;
  flex-direction: column;
}
.swatch {
  flex: 1;
}
.none {
  background: linear-gradient(160deg, #fff 46%, #d77 48% 52%, #fff 54%);
  border: 1px solid #999;
  box-sizing: border-box;
}
.status {
  height: 31px;
  display: flex;
  align-items: center;
  padding-left: 7px;
  background: #f3f3f3;
}
.stext {
  margin-left: 6px;
  width: 1163px;
  font-size: 10.5px;
  white-space: nowrap;
}
.sfill {
  margin-left: 1px;
}
.sswatch {
  width: 17px;
  height: 24px;
  box-sizing: border-box;
  background-color: #fff;
  background-image: linear-gradient(45deg, transparent 46%, #c22 46% 54%, transparent 54%);
  border: 1px solid #ccc;
}
.snone {
  margin-left: 4px;
  width: 20px;
}
.snib {
  margin-left: 109px;
}
.sblack {
  width: 18px;
  height: 24px;
  background: #231815;
}
.scmyk {
  margin-left: 5px;
  width: 179px;
  font-size: 10.5px;
  letter-spacing: 0.2px;
  white-space: nowrap;
}
.sscreen {
  margin-left: -2px;
}
.watermark {
  position: absolute;
  left: 1200px;
  top: 680px;
  width: 400px;
  height: 160px;
  pointer-events: none;
  overflow: visible;
}
.wm {
  fill: rgba(255, 255, 255, 0.85);
  stroke: #dcdcdc;
  stroke-width: 1.6;
}
.wm2 {
  fill: rgba(255, 255, 255, 0.85);
  stroke: #dadada;
  stroke-width: 1;
}
</style>
